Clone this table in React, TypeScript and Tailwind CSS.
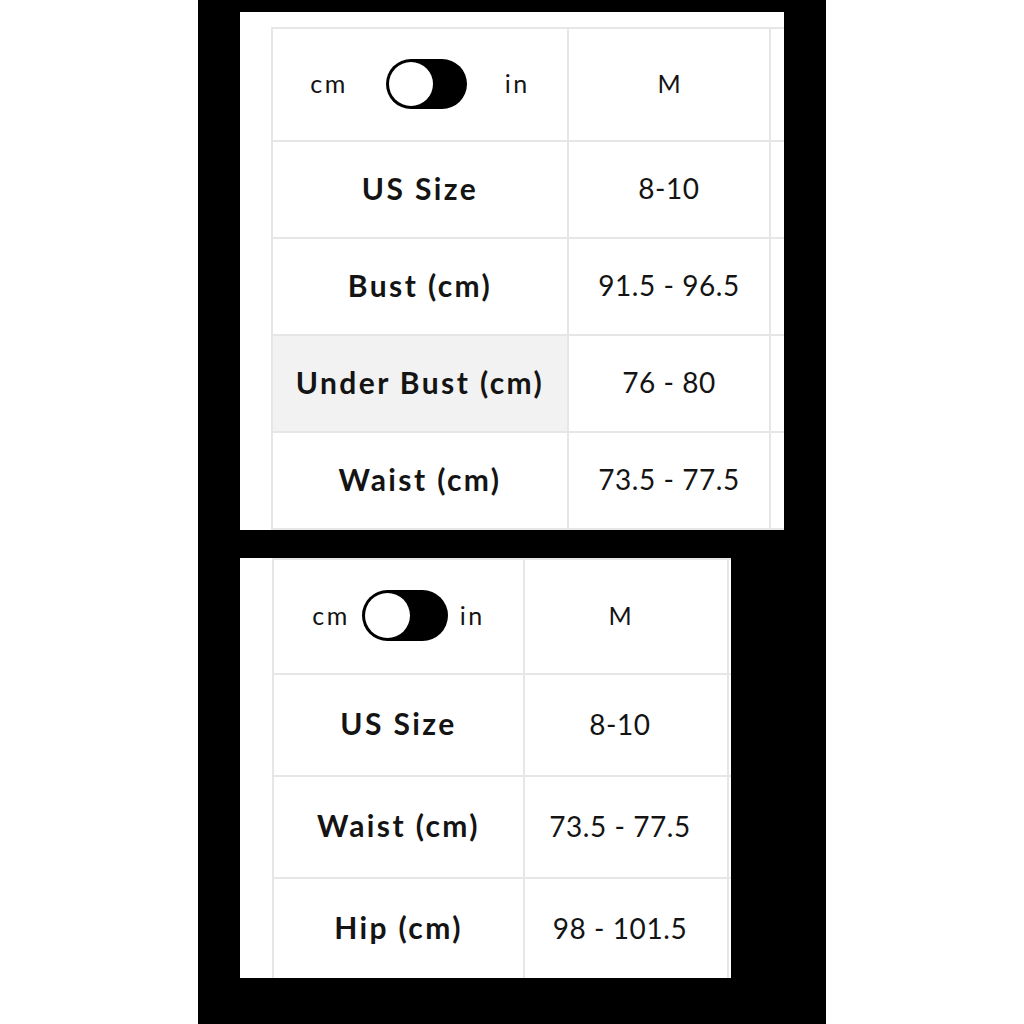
import React from 'react';

type Row = { label: string; value: string; hover?: boolean };

function Toggle({ w, h }: { w: number; h: number }) {
  return (
    <span
      className="relative inline-flex items-center rounded-full bg-black p-[3px]"
      style={{ width: w, height: h }}
    >
      <span className="block rounded-full bg-white" style={{ width: h - 6, height: h - 6 }} />
    </span>
  );
}

function SizeTable({
  cols,
  headerH,
  rowH,
  rows,
  tight,
}: {
  cols: string;
  headerH: string;
  rowH: string;
  rows: Row[];
  tight?: boolean;
}) {
  const valuePad = tight ? 'pr-[12px]' : '';
  return (
    <div className={`grid gap-[2px] bg-[#e6e6e6] p-[2px] ${cols}`}>
      <div
        className={`flex items-center justify-center bg-white pb-[2px] text-[25px] tracking-[0.1em] ${headerH} ${tight ? 'gap-[12px]' : 'gap-[38px]'}`}
      >
        <span>cm</span>
        {tight ? <Toggle w={86} h={51} /> : <Toggle w={81} h={50} />}
        <span>in</span>
      </div>
      <div className={`flex items-center justify-center bg-white pb-[2px] text-[25px] ${valuePad} ${headerH}`}>M</div>
      <div className={`bg-white ${headerH}`} />
      {rows.map((r) => (
        <React.Fragment key={r.label}>
          <div
            className={`flex items-center justify-center pb-[3px] text-[30px] font-bold tracking-[0.08em] ${rowH} ${r.hover ? 'bg-[#f2f2f2]' : 'bg-white'}`}
          >
            {r.label}
          </div>
          <div
            className={`flex items-center justify-center bg-white pb-[3px] text-[28px] tracking-[0.02em] ${valuePad} ${rowH}`}
          >
            {r.value}
          </div>
          <div className={`bg-white ${rowH}`} />
        </React.Fragment>
      ))}
    </div>
  );
}

export default function App() {
  return (
    <div
      className="flex h-[1024px] w-[1024px] bg-white text-[#141414]"
      style={{ fontFamily: 'Lato, "Open Sans", sans-serif' }}
    >
      <div className="w-[198px]" />
      <div className="flex w-[628px] flex-col bg-black pt-[12px]">
        <div className="ml-[42px] h-[518px] w-[544px] overflow-hidden bg-white pl-[31px] pt-[15px]">
          <SizeTable
            cols="grid-cols-[294px_200px_200px]"
            headerH="h-[111px]"
            rowH="h-[95px]"
            rows={[
              { label: 'US Size', value: '8-10' },
              { label: 'Bust (cm)', value: '91.5 - 96.5' },
              { label: 'Under Bust (cm)', value: '76 - 80', hover: true },
              { label: 'Waist (cm)', value: '73.5 - 77.5' },
            ]}
          />
        </div>
        <div className="ml-[42px] mt-[28px] h-[420px] w-[491px] overflow-hidden bg-white pl-[32px]">
          <SizeTable
            cols="grid-cols-[249px_202px_200px]"
            headerH="h-[113px]"
            rowH="h-[100px]"
            tight
            rows={[
              { label: 'US Size', value: '8-10' },
              { label: 'Waist (cm)', value: '73.5 - 77.5' },
              { label: 'Hip (cm)', value: '98 - 101.5' },
            ]}
          />
        </div>
      </div>
      <div className="flex-1" />
    </div>
  );
}
